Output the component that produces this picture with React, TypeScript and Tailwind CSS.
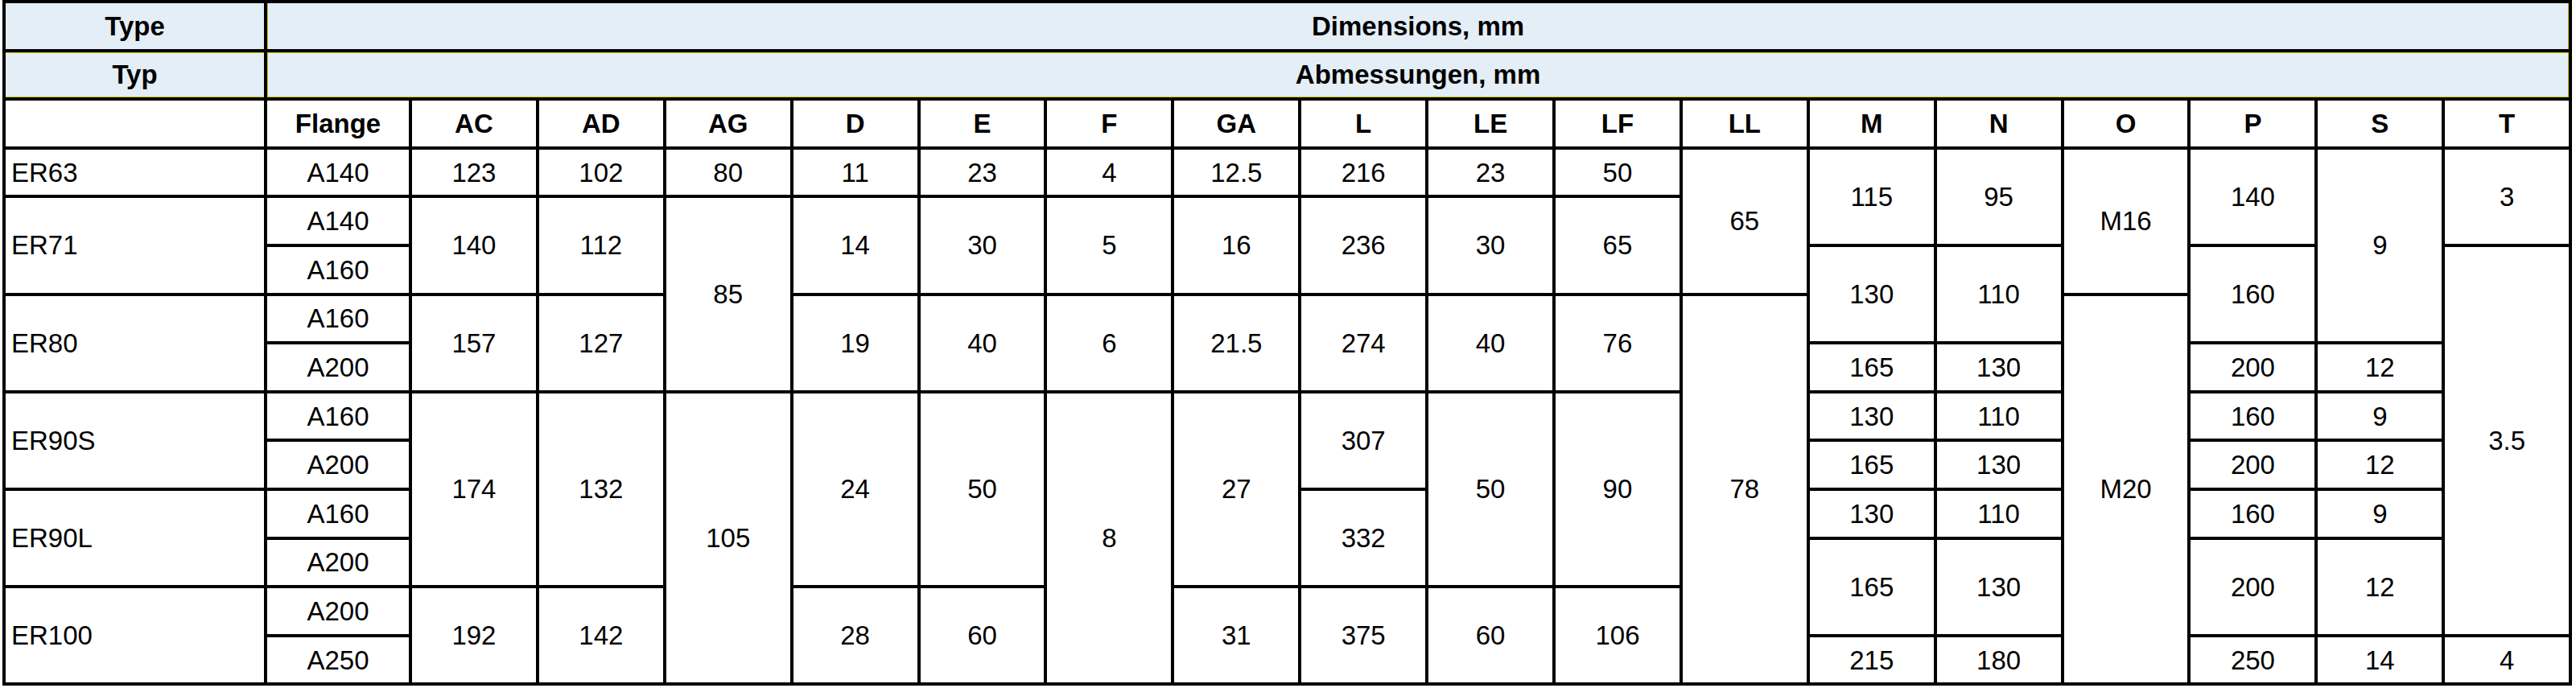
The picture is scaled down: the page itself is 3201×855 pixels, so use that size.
// Motor dimension sheet – rows are counted in half-row grid tracks (ER63 = 2, others = 4)

// literal grid-row classes so tailwind picks them up (data starts on grid line 7)
const ROW: Record<string, string> = {
  '0-2': 'row-[7/9]',
  '2-4': 'row-[9/11]',
  '4-6': 'row-[11/13]',
  '6-8': 'row-[13/15]',
  '8-10': 'row-[15/17]',
  '10-12': 'row-[17/19]',
  '12-14': 'row-[19/21]',
  '14-16': 'row-[21/23]',
  '16-18': 'row-[23/25]',
  '18-20': 'row-[25/27]',
  '20-22': 'row-[27/29]',
  '0-4': 'row-[7/11]',
  '0-6': 'row-[7/13]',
  '0-8': 'row-[7/15]',
  '2-6': 'row-[9/13]',
  '2-10': 'row-[9/17]',
  '4-8': 'row-[11/15]',
  '4-20': 'row-[11/27]',
  '6-10': 'row-[13/17]',
  '6-22': 'row-[13/29]',
  '10-14': 'row-[17/21]',
  '10-18': 'row-[17/25]',
  '10-22': 'row-[17/29]',
  '14-18': 'row-[21/25]',
  '16-20': 'row-[23/27]',
  '18-22': 'row-[25/29]',
}

const COL = [
  'col-start-1',
  'col-start-2',
  'col-start-3',
  'col-start-4',
  'col-start-5',
  'col-start-6',
  'col-start-7',
  'col-start-8',
  'col-start-9',
  'col-start-10',
  'col-start-11',
  'col-start-12',
  'col-start-13',
  'col-start-14',
  'col-start-15',
  'col-start-16',
  'col-start-17',
  'col-start-18',
  'col-start-19',
]

type Span = [string, string]

const typeRows: Span[] = [
  ['0-2', 'ER63'],
  ['2-6', 'ER71'],
  ['6-10', 'ER80'],
  ['10-14', 'ER90S'],
  ['14-18', 'ER90L'],
  ['18-22', 'ER100'],
]

const columns: [string, Span[]][] = [
  ['Flange', [['0-2', 'A140'], ['2-4', 'A140'], ['4-6', 'A160'], ['6-8', 'A160'], ['8-10', 'A200'], ['10-12', 'A160'], ['12-14', 'A200'], ['14-16', 'A160'], ['16-18', 'A200'], ['18-20', 'A200'], ['20-22', 'A250']]],
  ['AC', [['0-2', '123'], ['2-6', '140'], ['6-10', '157'], ['10-18', '174'], ['18-22', '192']]],
  ['AD', [['0-2', '102'], ['2-6', '112'], ['6-10', '127'], ['10-18', '132'], ['18-22', '142']]],
  ['AG', [['0-2', '80'], ['2-10', '85'], ['10-22', '105']]],
  ['D', [['0-2', '11'], ['2-6', '14'], ['6-10', '19'], ['10-18', '24'], ['18-22', '28']]],
  ['E', [['0-2', '23'], ['2-6', '30'], ['6-10', '40'], ['10-18', '50'], ['18-22', '60']]],
  ['F', [['0-2', '4'], ['2-6', '5'], ['6-10', '6'], ['10-22', '8']]],
  ['GA', [['0-2', '12.5'], ['2-6', '16'], ['6-10', '21.5'], ['10-18', '27'], ['18-22', '31']]],
  ['L', [['0-2', '216'], ['2-6', '236'], ['6-10', '274'], ['10-14', '307'], ['14-18', '332'], ['18-22', '375']]],
  ['LE', [['0-2', '23'], ['2-6', '30'], ['6-10', '40'], ['10-18', '50'], ['18-22', '60']]],
  ['LF', [['0-2', '50'], ['2-6', '65'], ['6-10', '76'], ['10-18', '90'], ['18-22', '106']]],
  ['LL', [['0-6', '65'], ['6-22', '78']]],
  ['M', [['0-4', '115'], ['4-8', '130'], ['8-10', '165'], ['10-12', '130'], ['12-14', '165'], ['14-16', '130'], ['16-20', '165'], ['20-22', '215']]],
  ['N', [['0-4', '95'], ['4-8', '110'], ['8-10', '130'], ['10-12', '110'], ['12-14', '130'], ['14-16', '110'], ['16-20', '130'], ['20-22', '180']]],
  ['O', [['0-6', 'M16'], ['6-22', 'M20']]],
  ['P', [['0-4', '140'], ['4-8', '160'], ['8-10', '200'], ['10-12', '160'], ['12-14', '200'], ['14-16', '160'], ['16-20', '200'], ['20-22', '250']]],
  ['S', [['0-8', '9'], ['8-10', '12'], ['10-12', '9'], ['12-14', '12'], ['14-16', '9'], ['16-20', '12'], ['20-22', '14']]],
  ['T', [['0-4', '3'], ['4-20', '3.5'], ['20-22', '4']]],
]

const cell = 'flex items-center border-r-[4px] border-b-[4px] border-black'

export default function App() {
  return (
    <div className="bg-white min-h-screen font-['Liberation_Sans',Arial,sans-serif] text-[33px] leading-none text-black">
      <div className="ml-[3px] w-max grid grid-cols-[325px_180px_repeat(17,157.9px)] grid-rows-[repeat(28,30.3px)] border-l-[4px] border-t-[4px] border-black">
        {/* title rows */}
        <div className={`${cell} row-[1/3] col-start-1 justify-center bg-[#e4eef6] font-bold`}>Type</div>
        <div className={`${cell} row-[1/3] col-[2/20] justify-center bg-[#e4eef6] font-bold shadow-[inset_1px_0_0_#c9c200,inset_-1px_0_0_#c9c200]`}>
          Dimensions, mm
        </div>
        <div className={`${cell} row-[3/5] col-start-1 justify-center bg-[#e4eef6] font-bold shadow-[inset_0_1px_0_#c9c200,inset_0_-1px_0_#c9c200]`}>
          Typ
        </div>
        <div className={`${cell} row-[3/5] col-[2/20] justify-center bg-[#e4eef6] font-bold shadow-[inset_1px_1px_0_#c9c200,inset_-1px_-1px_0_#c9c200]`}>
          Abmessungen, mm
        </div>

        {/* column headers */}
        <div className={`${cell} row-[5/7] col-start-1`} />
        {columns.map(([name], i) => (
          <div key={name} className={`${cell} row-[5/7] ${COL[i + 1]} justify-center font-bold`}>
            {name}
          </div>
        ))}

        {/* motor types */}
        {typeRows.map(([r, label]) => (
          <div key={label} className={`${cell} ${ROW[r]} col-start-1 justify-start pl-[7px]`}>
            {label}
          </div>
        ))}

        {/* values */}
        {columns.map(([name, spans], i) =>
          spans.map(([r, v]) => (
            <div key={`${name}-${r}`} className={`${cell} ${ROW[r]} ${COL[i + 1]} justify-center`}>
              {v}
            </div>
          ))
        )}
      </div>
    </div>
  )
}
